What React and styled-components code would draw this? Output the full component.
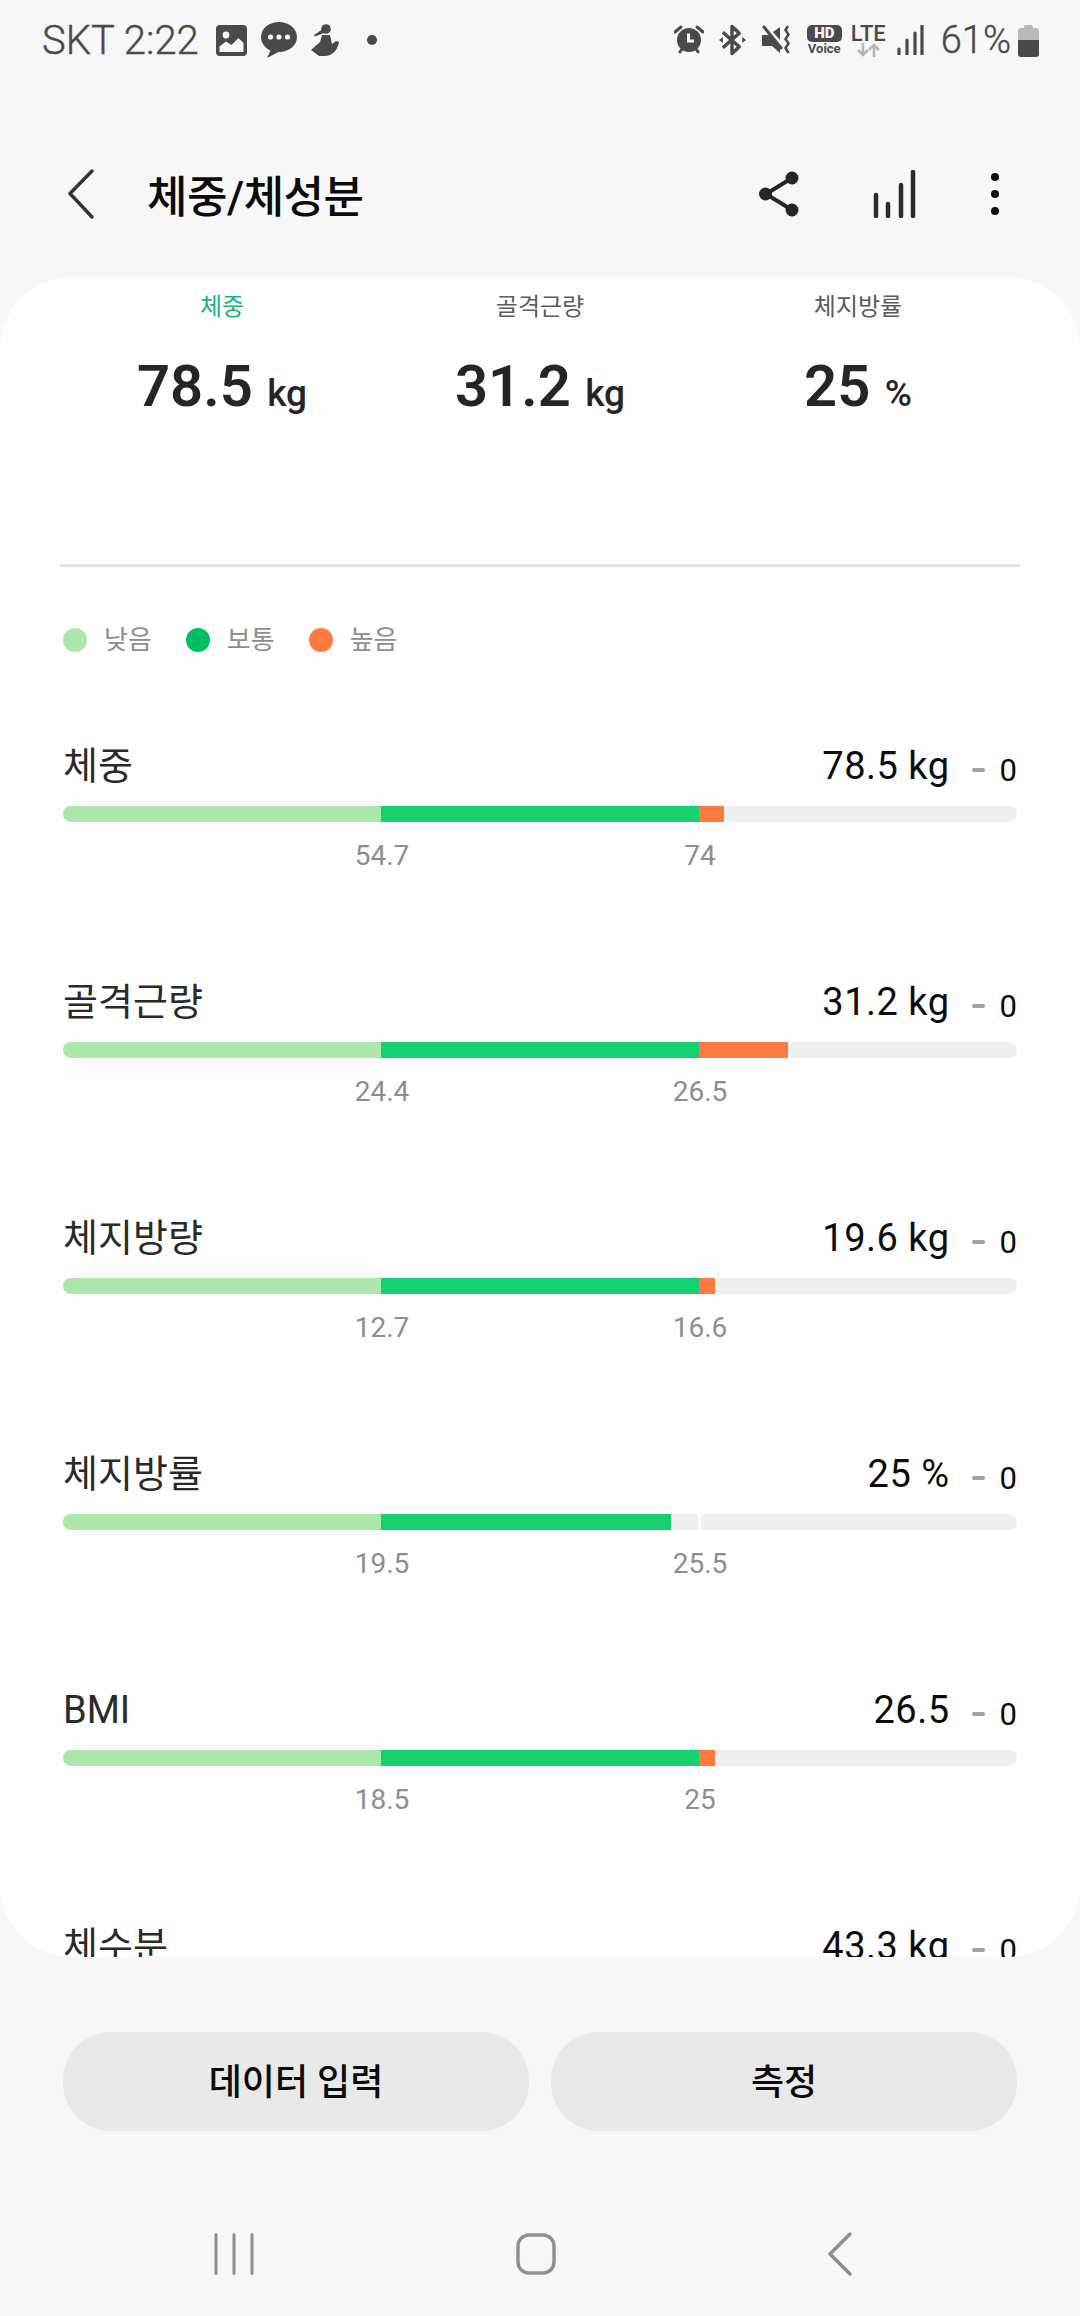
import React from 'react';
import styled, { createGlobalStyle } from 'styled-components';

const LOW = '#abe7ab';
const NORMAL = '#14d070';
const HIGH = '#ff7a3f';

const tabs = [
  { label: '체중', value: '78.5', unit: 'kg', active: true },
  { label: '골격근량', value: '31.2', unit: 'kg' },
  { label: '체지방률', value: '25', unit: '%' },
];

const legend = [
  { label: '낮음', color: LOW },
  { label: '보통', color: '#00bf63' },
  { label: '높음', color: HIGH },
];

// low and normal are px widths on the 954px track, high is what passes the second tick
const metrics = [
  { name: '체중', value: '78.5 kg', ticks: ['54.7', '74'], normal: 318, high: 25 },
  { name: '골격근량', value: '31.2 kg', ticks: ['24.4', '26.5'], normal: 318, high: 89 },
  { name: '체지방량', value: '19.6 kg', ticks: ['12.7', '16.6'], normal: 318, high: 16 },
  { name: '체지방률', value: '25 %', ticks: ['19.5', '25.5'], normal: 290, high: 0, marker: true },
  { name: 'BMI', value: '26.5', ticks: ['18.5', '25'], normal: 318, high: 16 },
  { name: '체수분', value: '43.3 kg', ticks: ['', ''], normal: 318, high: 16 },
];

const StatusIcons = () => (
  <>
    <StatusIcon width="31" height="31" viewBox="0 0 31 31">
      <rect width="31" height="31" rx="4" fill="#4a4a4a" />
      <circle cx="10" cy="10" r="3.4" fill="#f7f7f7" />
      <path d="M3.5 27v-5.5l6.5-5 5.5 3.5 7-7 5 5V27z" fill="#f7f7f7" />
    </StatusIcon>
    <StatusIcon width="36" height="36" viewBox="0 0 36 36">
      <path d="M18 0C8 0 0 6.5 0 15c0 6 4 11 9.500 13.500L6 36l11.500-6H18c10 0 18-6.500 18-15S28 0 18 0z" fill="#4a4a4a" />
      <circle cx="9.500" cy="15" r="2.600" fill="#f7f7f7" />
      <circle cx="18" cy="15" r="2.600" fill="#f7f7f7" />
      <circle cx="26.500" cy="15" r="2.600" fill="#f7f7f7" />
    </StatusIcon>
    <StatusIcon width="28" height="32" viewBox="0 0 28 32">
      <circle cx="15" cy="5" r="4.800" fill="#4a4a4a" />
      <path d="M12 5L3 11l1 1.500 9-3.500z" fill="#4a4a4a" />
      <path d="M11 11h8c1 3 1 6 2 9l4-3 3 1c-1 5-3 9-6 11-2 2-5 3-8 3H8l-8-6 9-8z" fill="#4a4a4a" />
    </StatusIcon>
    <StatusDot />
  </>
);

const SystemIcons = () => (
  <>
    <StatusIcon $gap={15} width="30" height="30" viewBox="0 0 30 30">
      <path d="M1 7l6-5M29 7l-6-5M6 27l2-3M24 27l-2-3" stroke="#4a4a4a" strokeWidth="3" strokeLinecap="round" />
      <circle cx="15" cy="15" r="12" fill="#4a4a4a" />
      <path d="M14.500 8.500V16H20" stroke="#f7f7f7" strokeWidth="3" fill="none" />
    </StatusIcon>
    <StatusIcon $gap={16} width="27" height="34" viewBox="0 0 28 34">
      <path d="M4 9l17 15-7.500 7V3L21 10 4 25" stroke="#4a4a4a" strokeWidth="3.600" fill="none" strokeLinejoin="round" />
      <path d="M0 17l4-3v6zM28 17l-4-3v6z" fill="#4a4a4a" />
    </StatusIcon>
    <StatusIcon $gap={15} width="30" height="30" viewBox="0 0 30 30">
      <path d="M0 10h6l2 .5L18 22v6l-8-7H0zM18 2v13L11 7z" fill="#4a4a4a" />
      <path d="M2 2l17 21" stroke="#4a4a4a" strokeWidth="3" strokeLinecap="round" />
      <path d="M26 1l-2.500 4 3 4.500-3 4.500 3 4.500-3 4.500 3 5" stroke="#4a4a4a" strokeWidth="2.500" fill="none" />
    </StatusIcon>
    <HdBadge>
      <HdMark>HD</HdMark>
      <HdVoice>Voice</HdVoice>
    </HdBadge>
    <LteBadge>
      <LteText>LTE</LteText>
      <svg width="24" height="14" viewBox="0 0 24 14">
        <path d="M7 0v12M2 7l5 5 5-5" stroke="#b5b5b5" strokeWidth="2.500" fill="none" />
        <path d="M18 14V2M13 7l5-5 5 5" stroke="#b5b5b5" strokeWidth="2.500" fill="none" />
      </svg>
    </LteBadge>
    <StatusIcon width="27" height="30" viewBox="0 0 27 30">
      <path d="M2 24v5M10 15v14M18 8v21M25 1v28" stroke="#4a4a4a" strokeWidth="3.200" strokeLinecap="round" />
    </StatusIcon>
    <BatteryText>61%</BatteryText>
    <StatusIcon width="21" height="33" viewBox="0 0 21 33">
      <path d="M6 3a2 2 0 0 1 2-2h5a2 2 0 0 1 2 2v1h3a3 3 0 0 1 3 3v9H0V7a3 3 0 0 1 3-3h3z" fill="#b9b9b9" />
      <path d="M0 16h21v14a3 3 0 0 1-3 3H3a3 3 0 0 1-3-3z" fill="#4a4a4a" />
    </StatusIcon>
  </>
);

const Metric = ({ name, value, ticks, normal, high, marker }) => (
  <Row>
    <RowHead>
      <RowName>{name}</RowName>
      <RowValue>{value}</RowValue>
      <RowDash />
      <RowDelta>0</RowDelta>
    </RowHead>
    <Track>
      <Segment $color={LOW} $width={318} />
      <Segment $color={NORMAL} $width={normal} />
      {high > 0 && <Segment $color={HIGH} $width={high} />}
      {marker && <Marker />}
    </Track>
    <Ticks>
      <Tick $column={1}>{ticks[0]}</Tick>
      <Tick $column={2}>{ticks[1]}</Tick>
    </Ticks>
  </Row>
);

const App = () => (
  <Page>
    <GlobalStyle />
    <StatusBar>
      <Carrier>SKT 2:22</Carrier>
      <StatusIcons />
      <StatusSpacer />
      <SystemIcons />
    </StatusBar>

    <Header>
      <BackButton width="26" height="50" viewBox="0 0 26 50">
        <path d="M24 2L2 24.500 24 48" stroke="#333" strokeWidth="3.400" fill="none" strokeLinecap="round" strokeLinejoin="round" />
      </BackButton>
      <Title>체중/체성분</Title>
      <HeaderActions>
        <svg width="40" height="46" viewBox="0 0 40 46">
          <path d="M33 7L7 23l26 16" stroke="#262626" strokeWidth="4" fill="none" />
          <circle cx="33" cy="7" r="6.500" fill="#262626" />
          <circle cx="6.500" cy="23" r="6.500" fill="#262626" />
          <circle cx="33" cy="39" r="6.500" fill="#262626" />
        </svg>
        <svg width="44" height="48" viewBox="0 0 44 48">
          <path d="M3 25v21M15 34v12M28 15v31M40 2v44" stroke="#2b2b2b" strokeWidth="4.500" strokeLinecap="round" />
        </svg>
        <Kebab>
          <KebabDot />
          <KebabDot />
          <KebabDot />
        </Kebab>
      </HeaderActions>
    </Header>

    <Card>
      <Tabs>
        {tabs.map(({ label, value, unit, active }) => (
          <Tab key={label}>
            <TabLabel $active={active}>{label}</TabLabel>
            <TabValue>
              {value} <TabUnit>{unit}</TabUnit>
            </TabValue>
          </Tab>
        ))}
      </Tabs>
      <Divider />
      <Legend>
        {legend.map(({ label, color }) => (
          <LegendItem key={label}>
            <LegendDot $color={color} />
            {label}
          </LegendItem>
        ))}
      </Legend>
      {metrics.map((metric) => (
        <Metric key={metric.name} {...metric} />
      ))}
    </Card>

    <Actions>
      <ActionButton>데이터 입력</ActionButton>
      <ActionButton>측정</ActionButton>
    </Actions>

    <NavBar>
      <svg width="40" height="42" viewBox="0 0 40 42">
        <path d="M2 1.500v39M20 1.500v39M38 1.500v39" stroke="#8f8f8f" strokeWidth="3" strokeLinecap="round" />
      </svg>
      <svg width="40" height="42" viewBox="0 0 40 42">
        <rect x="2" y="2" width="36" height="38" rx="11" stroke="#8f8f8f" strokeWidth="3.400" fill="none" />
      </svg>
      <NavBack width="24" height="44" viewBox="0 0 24 44">
        <path d="M22 2L2 22l20 20" stroke="#8f8f8f" strokeWidth="3.400" fill="none" strokeLinecap="round" strokeLinejoin="round" />
      </NavBack>
    </NavBar>
  </Page>
);

const GlobalStyle = createGlobalStyle`
  html, body {
    margin: 0;
    background: #f7f7f7;
  }

  * {
    box-sizing: border-box;
  }
`;

const Page = styled.div`
  display: flex;
  flex-direction: column;
  width: 1080px;
  height: 2316px;
  overflow: hidden;
  background: #f7f7f7;
  font-family: Roboto, "Noto Sans CJK KR", sans-serif;
`;

const StatusBar = styled.div`
  display: flex;
  flex: none;
  align-items: center;
  height: 80px;
  padding: 0 27px 0 42px;
  color: #4a4a4a;
`;

const Carrier = styled.span`
  margin-right: 17px;
  font-size: 40px;
  font-weight: 300;
  -webkit-text-stroke: 0.4px #4a4a4a;
`;

const StatusIcon = styled.svg`
  flex: none;
  margin-right: ${({ $gap = 14 }) => $gap}px;
`;

const StatusDot = styled.span`
  width: 10px;
  height: 10px;
  margin-left: 14px;
  border-radius: 50%;
  background: #4a4a4a;
`;

const StatusSpacer = styled.div`
  flex: 1;
`;

const HdBadge = styled.div`
  display: flex;
  flex-direction: column;
  align-items: center;
  width: 35px;
  margin-right: 11px;
`;

const HdMark = styled.span`
  width: 35px;
  height: 17px;
  border-radius: 5px;
  background: #4a4a4a;
  color: #f7f7f7;
  font-size: 15px;
  font-weight: 900;
  line-height: 17px;
  text-align: center;
`;

const HdVoice = styled.span`
  color: #4a4a4a;
  font-size: 13px;
  font-weight: 700;
  line-height: 14px;
`;

const LteBadge = styled.div`
  display: flex;
  flex-direction: column;
  align-items: center;
  width: 31px;
  margin-right: 13px;
`;

const LteText = styled.span`
  color: #4a4a4a;
  font-size: 22px;
  font-weight: 500;
  line-height: 19px;
`;

const BatteryText = styled.span`
  margin-right: 7px;
  margin-left: 3px;
  font-size: 38px;
  font-weight: 300;
  -webkit-text-stroke: 0.4px #4a4a4a;
`;

const Header = styled.header`
  display: flex;
  flex: none;
  align-items: center;
  height: 197px;
  padding: 30px 0 0 68px;
`;

const BackButton = styled.svg`
  margin-right: 53px;
`;

const Title = styled.h1`
  margin: 0;
  color: #0c0c0c;
  font-size: 44px;
  font-weight: 500;
  letter-spacing: -0.5px;
`;

const HeaderActions = styled.div`
  display: flex;
  align-items: center;
  gap: 74px;
  margin-left: auto;
  padding-right: 81px;
`;

const Kebab = styled.div`
  display: flex;
  flex-direction: column;
  gap: 9px;
`;

const KebabDot = styled.span`
  width: 8px;
  height: 8px;
  border-radius: 50%;
  background: #0c0c0c;
`;

const Card = styled.main`
  flex: none;
  height: 1680px;
  overflow: hidden;
  border-radius: 72px;
  background: #fefefe;
`;

const Tabs = styled.div`
  display: grid;
  grid-template-columns: repeat(3, 318px);
  justify-content: center;
  height: 287px;
`;

const Tab = styled.div`
  display: flex;
  flex-direction: column;
  align-items: center;
`;

const TabLabel = styled.span`
  margin-top: 13px;
  color: ${({ $active }) => ($active ? '#1fb27a' : '#5c5c5c')};
  font-size: 24px;
  line-height: 34px;
`;

const TabValue = styled.div`
  margin-top: 22px;
  color: #252525;
  font-size: 58px;
  font-weight: 600;
  line-height: 80px;
  white-space: nowrap;
`;

const TabUnit = styled.span`
  font-size: 37px;
  font-weight: 500;
`;

const Divider = styled.div`
  height: 3px;
  margin: 0 60px;
  background: #e4e4e4;
`;

const Legend = styled.div`
  display: flex;
  gap: 34px;
  margin-top: 61px;
  padding-left: 63px;
`;

const LegendItem = styled.div`
  display: flex;
  align-items: center;
  gap: 17px;
  color: #8e8e8e;
  font-size: 26px;
  line-height: 24px;
`;

const LegendDot = styled.span`
  width: 24px;
  height: 24px;
  border-radius: 50%;
  background: ${({ $color }) => $color};
`;

const Row = styled.section`
  height: 236px;
  padding: 0 63px;

  &:first-of-type {
    margin-top: 85px;
  }
`;

const RowHead = styled.div`
  display: flex;
  align-items: baseline;
  height: 58px;
  color: #0c0c0c;
  font-size: 38px;
  line-height: 58px;
`;

const RowName = styled.span`
  margin-right: auto;
  color: #2a2a2a;
  font-size: 38px;
`;

const RowValue = styled.span`
  letter-spacing: 0.5px;
`;

const RowDash = styled.span`
  align-self: center;
  width: 13px;
  height: 4px;
  margin: 8px 15px 0 22px;
  border-radius: 2px;
  background: #a0a0a0;
`;

const RowDelta = styled.span`
  position: relative;
  top: 2px;
  font-size: 31px;
`;

const Track = styled.div`
  position: relative;
  display: flex;
  height: 16px;
  margin-top: 11px;
  overflow: hidden;
  border-radius: 8px;
  background: #f0f0f0;
`;

const Segment = styled.span`
  flex: none;
  width: ${({ $width }) => $width}px;
  background: ${({ $color }) => $color};
`;

const Marker = styled.span`
  position: absolute;
  top: 0;
  left: 635px;
  width: 3px;
  height: 100%;
  background: #fefefe;
`;

const Ticks = styled.div`
  display: grid;
  grid-template-columns: repeat(3, 1fr);
  margin-top: 17px;
`;

const Tick = styled.span`
  grid-column: ${({ $column }) => $column};
  justify-self: end;
  transform: translateX(calc(50% + 1px));
  color: #8e8e8e;
  font-size: 28px;
  line-height: 34px;
`;

const Actions = styled.div`
  display: grid;
  flex: none;
  grid-template-columns: 1fr 1fr;
  gap: 22px;
  padding: 75px 63px 0;
`;

const ActionButton = styled.button`
  height: 99px;
  padding: 0 0 5px;
  border: 0;
  border-radius: 48px;
  background: #e9e9e9;
  color: #0c0c0c;
  font-family: inherit;
  font-size: 36px;
  font-weight: 500;
`;

const NavBar = styled.nav`
  display: flex;
  flex: none;
  align-items: center;
  gap: 262px;
  height: 90px;
  margin-top: 78px;
  padding-left: 214px;
`;

const NavBack = styled.svg`
  margin-left: 10px;
`;

export default App;
